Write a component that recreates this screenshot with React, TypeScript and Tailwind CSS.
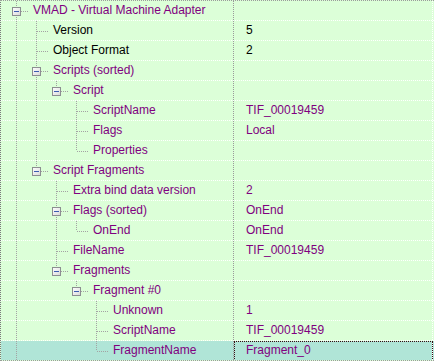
type Row = {
  name: string;
  value?: string;
  guides: boolean[];
  last?: boolean;
  exp?: boolean;
  dark?: boolean;
  darkValue?: boolean;
  root?: boolean;
};

const rows: Row[] = [
  { name: "VMAD - Virtual Machine Adapter", guides: [], exp: true, root: true },
  { name: "Version", value: "5", guides: [true], dark: true, darkValue: true },
  { name: "Object Format", value: "2", guides: [true], dark: true, darkValue: true },
  { name: "Scripts (sorted)", guides: [true], exp: true },
  { name: "Script", guides: [true, true], exp: true, last: true },
  { name: "ScriptName", value: "TIF_00019459", guides: [true, true, false] },
  { name: "Flags", value: "Local", guides: [true, true, false] },
  { name: "Properties", guides: [true, true, false], last: true },
  { name: "Script Fragments", guides: [true], exp: true, last: true },
  { name: "Extra bind data version", value: "2", guides: [true, false] },
  { name: "Flags (sorted)", value: "OnEnd", guides: [true, false], exp: true },
  { name: "OnEnd", value: "OnEnd", guides: [true, false, true], last: true },
  { name: "FileName", value: "TIF_00019459", guides: [true, false] },
  { name: "Fragments", guides: [true, false], exp: true, last: true },
  { name: "Fragment #0", guides: [true, false, false], exp: true, last: true },
  { name: "Unknown", value: "1", guides: [true, false, false, false] },
  { name: "ScriptName", value: "TIF_00019459", guides: [true, false, false, false] },
  { name: "FragmentName", value: "Fragment_0", guides: [true, false, false, false], last: true },
];

const LINE = "#a3a3a3";

function Guide({ on }: { on: boolean }) {
  return (
    <svg width="20" height="19" className="shrink-0" shapeRendering="crispEdges">
      {on && <line x1="10.5" y1="0" x2="10.5" y2="19" stroke={LINE} strokeDasharray="1 1" />}
    </svg>
  );
}

function Connector({ last, exp }: { last?: boolean; exp?: boolean }) {
  return (
    <svg width="27" height="19" className="shrink-0" shapeRendering="crispEdges">
      <defs>
        <linearGradient id="box" x1="0" y1="0" x2="1" y2="1">
          <stop offset="0" stopColor="#ffffff" />
          <stop offset="1" stopColor="#d8d8d8" />
        </linearGradient>
      </defs>
      <line x1="10.5" y1="0" x2="10.5" y2="10" stroke={LINE} strokeDasharray="1 1" />
      {!last && <line x1="10.5" y1="10" x2="10.5" y2="19" stroke={LINE} strokeDasharray="1 1" />}
      <line x1="11" y1="10.5" x2="23" y2="10.5" stroke={LINE} strokeDasharray="1 1" />
      {exp && (
        <g>
          <rect x="6.5" y="6.5" width="8" height="8" fill="url(#box)" stroke="#8c8e91" />
          <line x1="8" y1="10.5" x2="13" y2="10.5" stroke="#3a5cb0" />
        </g>
      )}
    </svg>
  );
}

export default function App() {
  return (
    <div
      className="w-[434px] h-[361px] bg-[#dcffd8] border-l border-l-[#7a7a7a] border-t border-b border-dotted border-t-[#9a9a9a] border-b-[#9a9a9a] overflow-hidden text-[12px] leading-[19px] text-[#800080]"
      style={{ fontFamily: '"Liberation Sans", Arial, sans-serif' }}
    >
      {rows.map((r, i) => {
        const isLast = i === rows.length - 1;
        return (
          <div
            key={i}
            className={`flex ${isLast ? "h-[19px] bg-[#b0e5d7]" : "h-5 border-b border-dotted border-white"}`}
          >
            <div className="flex w-[233px] shrink-0 pl-[5px] border-r border-dotted border-[#9a9a9a] overflow-hidden whitespace-nowrap">
              {r.guides.map((g, j) => (
                <Guide key={j} on={g} />
              ))}
              <Connector last={r.root ? false : r.last} exp={r.exp} />
              <span className={r.dark ? "text-black" : ""}>{r.name}</span>
            </div>
            <div
              className={`relative w-[199px] shrink-0 pl-3 border-r border-dotted border-white whitespace-nowrap ${r.darkValue ? "text-black" : ""}`}
            >
              {r.value}
              {isLast && (
                <div className="absolute left-0 top-0 -right-px -bottom-px border border-dotted border-[#3a0a10]" />
              )}
            </div>
          </div>
        );
      })}
    </div>
  );
}
